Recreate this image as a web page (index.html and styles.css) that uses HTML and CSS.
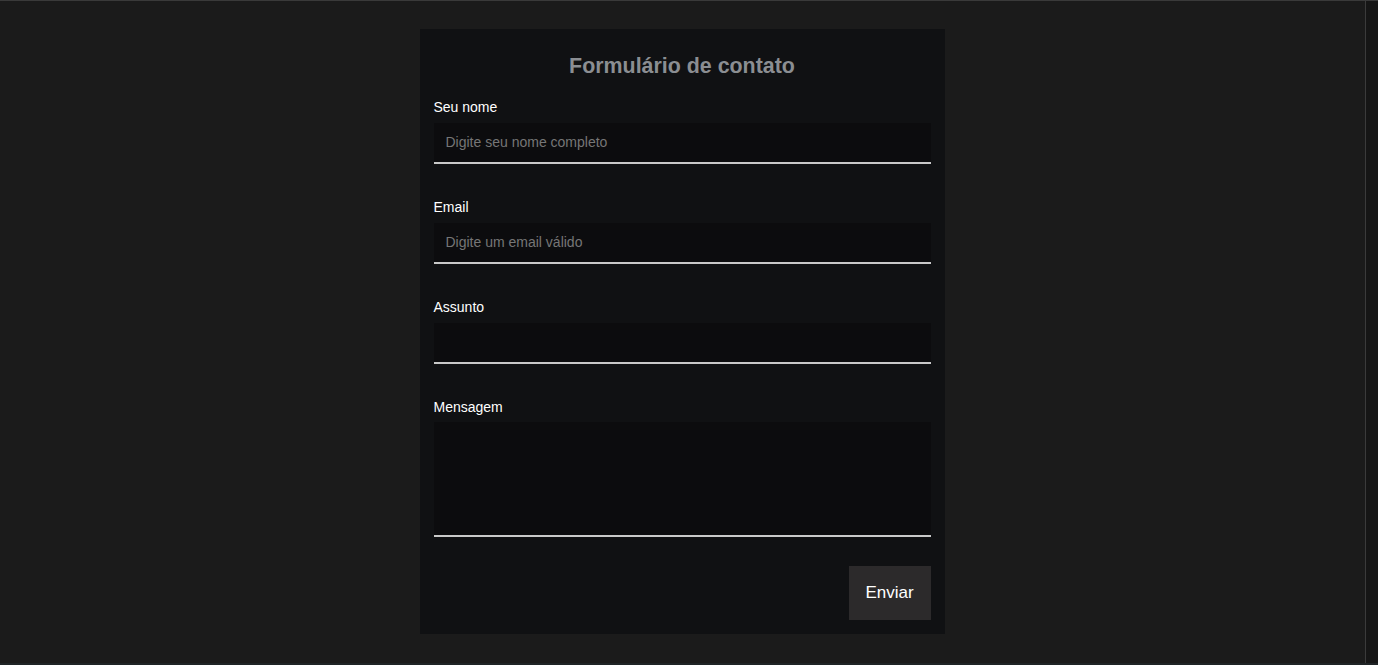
FILE: index.html
```html
<!DOCTYPE html>
<html lang="pt-BR">
<head>
<meta charset="utf-8">
<title>Formulário de contato</title>
<link rel="stylesheet" href="styles.css">
</head>
<body>
<div class="viewport">
  <main class="page">
    <form class="card">
      <h2 class="title">Formulário de contato</h2>
      <div class="field">
        <label class="label" for="nome">Seu nome</label>
        <input class="input" id="nome" type="text" placeholder="Digite seu nome completo">
      </div>
      <div class="field">
        <label class="label" for="email">Email</label>
        <input class="input" id="email" type="email" placeholder="Digite um email válido">
      </div>
      <div class="field">
        <label class="label" for="assunto">Assunto</label>
        <input class="input" id="assunto" type="text">
      </div>
      <div class="field field-last">
        <label class="label" for="msg">Mensagem</label>
        <textarea class="input textarea" id="msg"></textarea>
      </div>
      <div class="actions">
        <button class="btn" type="button">Enviar</button>
      </div>
    </form>
  </main>
  <div class="side"></div>
</div>
</body>
</html>
```
FILE: styles.css
```css
* { box-sizing: border-box; }
html, body {
  margin: 0;
  padding: 0;
  height: 100%;
  background: #1b1b1b;
  font-family: "Liberation Sans", Arial, sans-serif;
}
.viewport {
  display: flex;
  height: 665px;
  border-top: 1px solid #3a3a3a;
  border-bottom: 2px solid #1f2426;
}
.page {
  flex: 0 0 1366px;
  border-right: 1px solid #3b3b3b;
  padding-top: 28px;
  display: flex;
  justify-content: center;
  align-items: flex-start;
  padding-right: 1px;
}
.side {
  flex: 1;
  background: #161616;
}
.card {
  width: 525px;
  background: #101113;
  padding: 14px;
  display: flex;
  flex-direction: column;
}
.title {
  margin: 11px 0 21px;
  text-align: center;
  font-size: 21.4px;
  line-height: 24px;
  font-weight: bold;
  color: #8b8e92;
}
.field {
  display: flex;
  flex-direction: column;
  gap: 8px;
  margin-bottom: 35px;
}
.label {
  color: #ffffff;
  font-size: 14px;
  line-height: 16px;
}
.input {
  display: block;
  width: 100%;
  height: 41px;
  background: #0c0c0e;
  border: none;
  border-bottom: 2px solid #c9c9c9;
  padding: 0 12px 1px;
  font-family: "Liberation Sans", Arial, sans-serif;
  font-size: 14px;
  color: #ddd;
  outline: none;
}
.input::placeholder {
  color: #767676;
}
.textarea {
  height: 115px;
  resize: none;
}
.field-last {
  gap: 7px;
  margin-bottom: 29px;
}
.actions {
  display: flex;
  justify-content: flex-end;
}
.btn {
  width: 82px;
  height: 54px;
  background: #2c2a2b;
  border: none;
  color: #ffffff;
  font-family: "Liberation Sans", Arial, sans-serif;
  font-size: 17px;
  cursor: pointer;
}
```
